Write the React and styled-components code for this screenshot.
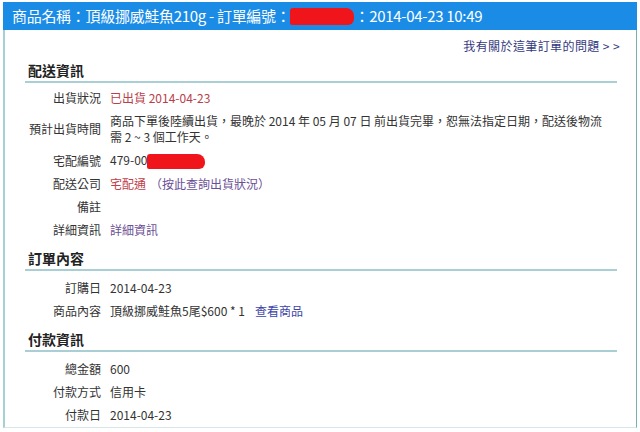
import React from "react";
import styled, { createGlobalStyle } from "styled-components";

const Global = createGlobalStyle`
  html, body { margin: 0; padding: 0; background: #ffffff; }
  body { font-family: "Noto Sans CJK TC", "Noto Sans", sans-serif; color: #333; }
`;

const Page = styled.div`
  padding: 2px 3px 0;
  width: 640px;
  box-sizing: border-box;
`;

const Header = styled.div`
  height: 28px;
  background: #1b8ce6;
  color: #fff;
  font-size: 15px;
  line-height: 28px;
  padding-left: 9px;
  white-space: nowrap;
  display: flex;
  align-items: center;
  letter-spacing: -0.3px;
`;

const Redact = styled.span`
  display: inline-block;
  width: ${(p) => p.$w}px;
  height: ${(p) => p.$h}px;
  background: #f0151a;
  border-radius: 3px 8px 6px 2px;
  vertical-align: middle;
  margin: 0 ${(p) => p.$mr || 0}px 0 ${(p) => p.$ml || 0}px;
`;

const Panel = styled.div`
  border-left: 2px solid #a6d0d4;
  border-right: 1px solid #78b0b4;
  border-bottom: 1px solid #d6e6ea;
  box-shadow: 0 3px 0 #eef2f4;
  height: 398px;
  padding: 0 19px 0 20px;
  box-sizing: border-box;
`;

const TopLink = styled.div`
  text-align: right;
  font-size: 12px;
  line-height: 16px;
  padding-top: 8px;
  margin-right: -3px;
  color: #35397e;
  letter-spacing: 0.4px;
`;

const Heading = styled.div`
  font-size: 14px;
  font-weight: bold;
  line-height: 20px;
  padding: 0 0 1px 3px;
  border-bottom: 2px solid #a9ced4;
  margin-top: ${(p) => p.$mt}px;
  margin-bottom: ${(p) => p.$mb}px;
  color: #222;
`;

const Row = styled.div`
  display: grid;
  grid-template-columns: 76px 1fr;
  column-gap: 9px;
  align-items: center;
  font-size: 12px;
  line-height: 16px;
  padding: 4px 0 3px;
`;

const Label = styled.div`
  text-align: right;
  white-space: nowrap;
  color: #333;
`;

const Value = styled.div`
  color: ${(p) => p.$color || "#333"};
  padding-right: 4px;
`;

const Link = styled.span`
  color: ${(p) => p.$color};
  margin-left: ${(p) => p.$ml || 0}px;
`;

export default function App() {
  return (
    <>
      <Global />
      <Page>
        <Header>
          商品名稱：頂級挪威鮭魚210g - 訂單編號：
          <Redact $w={64} $h={17} />
          ：2014-04-23 10:49
        </Header>
        <Panel>
          <TopLink>我有關於這筆訂單的問題 &gt; &gt;</TopLink>
          <Heading $mt={6} $mb={3}>配送資訊</Heading>
          <Row>
            <Label>出貨狀況</Label>
            <Value $color="#b8404a">已出貨 2014-04-23</Value>
          </Row>
          <Row>
            <Label>預計出貨時間</Label>
            <Value>
              商品下單後陸續出貨，最晚於 2014 年 05 月 07 日 前出貨完畢，恕無法指定日期，配送後物流需 2 ~ 3 個工作天。
            </Value>
          </Row>
          <Row>
            <Label>宅配編號</Label>
            <Value>
              479-00
              <Redact $w={58} $h={15} />
            </Value>
          </Row>
          <Row>
            <Label>配送公司</Label>
            <Value>
              <Link $color="#c0404a">宅配通</Link>
              <Link $color="#6b4f96" $ml={4}>（按此查詢出貨狀況）</Link>
            </Value>
          </Row>
          <Row>
            <Label>備註</Label>
            <Value></Value>
          </Row>
          <Row>
            <Label>詳細資訊</Label>
            <Value>
              <Link $color="#6b4f96">詳細資訊</Link>
            </Value>
          </Row>
          <Heading $mt={7} $mb={5}>訂單內容</Heading>
          <Row>
            <Label>訂購日</Label>
            <Value>2014-04-23</Value>
          </Row>
          <Row>
            <Label>商品內容</Label>
            <Value>
              頂級挪威鮭魚5尾$600 * 1
              <Link $color="#3c44a8" $ml={10}>查看商品</Link>
            </Value>
          </Row>
          <Heading $mt={7} $mb={5}>付款資訊</Heading>
          <Row>
            <Label>總金額</Label>
            <Value>600</Value>
          </Row>
          <Row>
            <Label>付款方式</Label>
            <Value>信用卡</Value>
          </Row>
          <Row>
            <Label>付款日</Label>
            <Value>2014-04-23</Value>
          </Row>
        </Panel>
      </Page>
    </>
  );
}
